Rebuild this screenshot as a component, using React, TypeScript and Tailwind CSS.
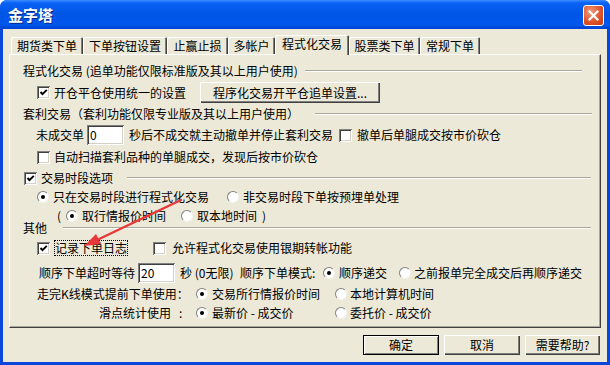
import React from "react";

const sunken =
  "bg-white shadow-[inset_1px_1px_#808080,inset_-1px_-1px_#ffffff,inset_2px_2px_#404040,inset_-2px_-2px_#d4d0c8]";

const Check = ({ checked, className = "" }: { checked?: boolean; className?: string }) => (
  <span className={`flex h-[13px] w-[13px] shrink-0 items-center justify-center ${sunken} ${className}`}>
    {checked && (
      <svg width="9" height="9" viewBox="0 0 9 9">
        <polyline points="1.5,4 3.5,6.2 7.8,1.8" fill="none" stroke="#000" strokeWidth="1.9" />
      </svg>
    )}
  </span>
);

const Radio = ({ on, className = "" }: { on?: boolean; className?: string }) => (
  <span
    className={`flex h-[12px] w-[12px] shrink-0 items-center justify-center rounded-full border border-t-[#808080] border-l-[#808080] border-r-[#f4f3ee] border-b-[#f4f3ee] bg-white ${className}`}
  >
    {on && <span className="h-[4px] w-[4px] rounded-full bg-black" />}
  </span>
);

const Etch = ({ className = "" }: { className?: string }) => (
  <span className={`h-[2px] flex-1 border-t border-t-[#aca899] border-b border-b-white ${className}`} />
);

const Field = ({ value, className = "" }: { value: string; className?: string }) => (
  <span className={`flex h-[20px] w-[37px] shrink-0 items-center pl-[3px] ${sunken} ${className}`}>{value}</span>
);

const Btn = ({ label, def, className = "" }: { label: string; def?: boolean; className?: string }) => (
  <span
    className={`flex shrink-0 items-center justify-center bg-[#ece9d8] ${
      def
        ? "border border-black shadow-[inset_1px_1px_#ffffff,inset_-1px_-1px_#808080]"
        : "shadow-[inset_1px_1px_#ffffff,inset_-1px_-1px_#404040,inset_-2px_-2px_#808080]"
    } ${className}`}
  >
    {label}
  </span>
);

const tabs = [
  { name: "期货类下单", w: "w-[72px]" },
  { name: "下单按钮设置", w: "w-[84px]" },
  { name: "止赢止损", w: "w-[61px]" },
  { name: "多帐户", w: "w-[47px]" },
  { name: "程式化交易", w: "w-[74px]", active: true },
  { name: "股票类下单", w: "w-[71px]" },
  { name: "常规下单", w: "w-[60px]" },
];

export default function App() {
  return (
    <div className="relative h-[365px] w-[610px] overflow-hidden whitespace-nowrap rounded-t-[7px] bg-[#0a48dc] text-[12px] leading-[14px] text-black font-['Noto_Sans_CJK_SC',sans-serif]">
      {/* title bar */}
      <div className="flex h-[29px] items-center justify-between bg-[linear-gradient(180deg,#3b8dff_0%,#0a62f5_10%,#0055e5_45%,#0057ec_85%,#0041d0_100%)] pl-[8px] pr-[6px]">
        <span className="text-[15px] font-bold leading-[18px] text-white [text-shadow:1px_1px_#0a2a8a]">金字塔</span>
        <span className="mt-[1px] flex h-[21px] w-[21px] items-center justify-center rounded-[3px] border border-white bg-[radial-gradient(circle_at_35%_30%,#f39a7c_0%,#e0542d_55%,#c23a12_100%)]">
          <svg width="11" height="11" viewBox="0 0 11 11">
            <path d="M1.5 1.5l8 8M9.5 1.5l-8 8" stroke="#fff" strokeWidth="2.2" strokeLinecap="square" />
          </svg>
        </span>
      </div>

      {/* client */}
      <div className="mx-[3px] h-[333px] w-[604px] bg-[#ece9d8]">
        <div className="flex h-[25px] items-end pl-[8px]">
          {tabs.map((t) =>
            t.active ? (
              <span
                key={t.name}
                className={`relative z-10 -mb-[1px] flex h-[20px] items-start justify-center rounded-t-[2px] bg-[#ece9d8] pt-[2px] shadow-[inset_1px_1px_#ffffff,inset_-1px_0_#404040,inset_-2px_0_#808080] ${t.w}`}
              >
                {t.name}
              </span>
            ) : (
              <span
                key={t.name}
                className={`flex h-[17px] items-center justify-center rounded-t-[2px] bg-[#ece9d8] shadow-[inset_1px_1px_#ffffff,inset_-1px_0_#404040,inset_-2px_0_#808080] ${t.w}`}
              >
                {t.name}
              </span>
            )
          )}
        </div>

        <div className="ml-[6px] flex h-[274px] w-[592px] flex-col border border-t-white border-l-white border-r-[#404040] border-b-[#404040] shadow-[inset_-1px_-1px_#aca899]">
          {/* 程式化交易 */}
          <div className="mt-[9px] flex h-[14px] items-center">
            <span className="ml-[13px] w-[282px] shrink-0">程式化交易 (追单功能仅限标准版及其以上用户使用)</span>
            <Etch className="mr-[18px]" />
          </div>
          <div className="mt-[4px] flex h-[21px] items-center">
            <Check checked className="ml-[27px]" />
            <span className="ml-[4px] w-[132px] shrink-0">开仓平仓使用统一的设置</span>
            <Btn label="程序化交易开平仓追单设置..." className="ml-[14px] h-[21px] w-[180px]" />
          </div>

          {/* 套利交易 */}
          <div className="mt-[4px] flex h-[14px] items-center">
            <span className="ml-[13px] w-[292px] shrink-0">套利交易（套利功能仅限专业版及其以上用户使用）</span>
            <Etch className="mr-[8px]" />
          </div>
          <div className="mt-[4px] flex h-[20px] items-center">
            <span className="ml-[26px] w-[48px] shrink-0">未成交单</span>
            <Field value="0" className="ml-[3px]" />
            <span className="ml-[5px] w-[204px] shrink-0">秒后不成交就主动撤单并停止套利交易</span>
            <Check className="ml-[6px]" />
            <span className="ml-[5px]">撤单后单腿成交按市价砍仓</span>
          </div>
          <div className="mt-[5px] flex h-[14px] items-center">
            <Check className="ml-[27px]" />
            <span className="ml-[4px]">自动扫描套利品种的单腿成交，发现后按市价砍仓</span>
          </div>

          {/* 交易时段选项 */}
          <div className="mt-[7px] flex h-[14px] items-center">
            <Check checked className="ml-[14px]" />
            <span className="ml-[4px] w-[72px] shrink-0">交易时段选项</span>
            <Etch className="ml-[14px] mr-[9px]" />
          </div>
          <div className="mt-[5px] flex h-[14px] items-center">
            <Radio on className="ml-[27px]" />
            <span className="ml-[4px] w-[161px] shrink-0">只在交易时段进行程式化交易</span>
            <Radio className="ml-[13px]" />
            <span className="ml-[4px]">非交易时段下单按预埋单处理</span>
          </div>
          <div className="mt-[6px] flex h-[12px] items-center">
            <span className="ml-[47px] w-[9px] shrink-0">(</span>
            <Radio on />
            <span className="ml-[4px] w-[84px] shrink-0">取行情报价时间</span>
            <Radio className="ml-[15px]" />
            <span className="ml-[4px] w-[60px] shrink-0">取本地时间</span>
            <span className="ml-[5px]">)</span>
          </div>

          {/* 其他 */}
          <div className="flex h-[12px] items-center">
            <span className="ml-[13px] w-[24px] shrink-0">其他</span>
            <Etch className="ml-[16px] mr-[9px]" />
          </div>
          <div className="mt-[6px] flex h-[16px] items-center">
            <Check checked className="ml-[27px]" />
            <span className="ml-[4px] flex h-[16px] w-[74px] shrink-0 items-center justify-center border border-dotted border-black">
              记录下单日志
            </span>
            <Check className="ml-[25px]" />
            <span className="ml-[6px]">允许程式化交易使用银期转帐功能</span>
          </div>
          <div className="mt-[7px] flex h-[20px] items-center">
            <span className="ml-[29px] w-[96px] shrink-0">顺序下单超时等待</span>
            <Field value="20" className="ml-[3px]" />
            <span className="ml-[5px] w-[60px] shrink-0">秒 (0无限)</span>
            <span className="w-[82px] shrink-0">顺序下单模式:</span>
            <Radio on className="ml-[1px]" />
            <span className="ml-[4px] w-[48px] shrink-0">顺序递交</span>
            <Radio className="ml-[12px]" />
            <span className="ml-[3px]">之前报单完全成交后再顺序递交</span>
          </div>
          <div className="mt-[4px] flex h-[14px] items-center">
            <span className="ml-[27px] w-[159px] shrink-0">走完K线模式提前下单使用：</span>
            <Radio on />
            <span className="ml-[4px] w-[123px] shrink-0">交易所行情报价时间</span>
            <Radio />
            <span className="ml-[3px]">本地计算机时间</span>
          </div>
          <div className="mt-[5px] flex h-[14px] items-center">
            <span className="ml-[89px] w-[80px] shrink-0">滑点统计使用</span>
            <span className="w-[17px] shrink-0">:</span>
            <Radio on />
            <span className="ml-[4px] w-[123px] shrink-0">最新价 - 成交价</span>
            <Radio />
            <span className="ml-[3px]">委托价 - 成交价</span>
          </div>
        </div>

        <div className="mt-[7px] flex h-[20px] justify-end gap-[5px] pr-[7px]">
          <Btn label="确定" def className="h-[20px] w-[76px]" />
          <Btn label="取消" className="h-[20px] w-[76px]" />
          <Btn label="需要帮助?" className="h-[20px] w-[75px]" />
        </div>
      </div>

      {/* annotation arrow */}
      <svg className="pointer-events-none absolute left-0 top-0" width="610" height="365">
        <line x1="181" y1="200" x2="97" y2="240" stroke="#e8383a" strokeWidth="2.4" strokeLinecap="round" />
        <polygon points="84,246 101,244 96,234" fill="#e8383a" />
      </svg>
    </div>
  );
}
